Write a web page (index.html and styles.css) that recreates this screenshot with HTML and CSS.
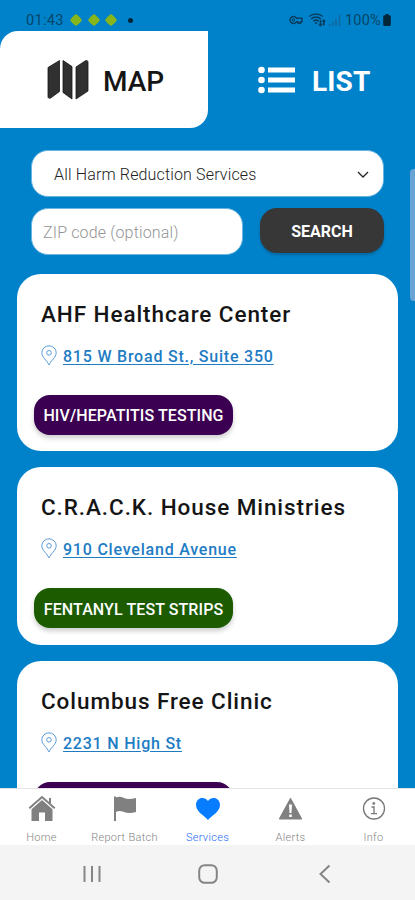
FILE: index.html
```html
<!DOCTYPE html>
<html lang="en">
<head>
<meta charset="utf-8">
<meta name="viewport" content="width=device-width">
<title>Services</title>
<link rel="stylesheet" href="styles.css">
</head>
<body>
<svg class="defs" width="0" height="0" aria-hidden="true">
  <symbol id="pin" viewBox="0 0 16 21"><path d="M8 20C6.500 16 .8 12.300.8 7.800a7.200 7 0 0 1 14.400 0C15.200 12.300 9.500 16 8 20Z"/><circle cx="8" cy="7.800" r="2.300"/></symbol>
  <symbol id="droid" viewBox="0 0 12 12"><path d="M6 0 8 1.500 10 3.500 12 6.200 10 8.800 8 10.500 6 12 4 10.500 2 8.800 0 6.200 2 3.500 4 1.500Z"/></symbol>
</svg>
<div class="screen">
  <header class="status">
    <span class="clock">01:43</span>
    <div class="droids">
      <svg><use href="#droid"/></svg><svg><use href="#droid"/></svg><svg><use href="#droid"/></svg>
    </div>
    <i class="dot"></i>
    <svg class="signals" width="53" height="16" viewBox="0 0 53 16" fill="none" stroke="#073e60">
      <path stroke-width="1.500" d="M7.500 6.200A3.500 3.500 0 1 0 7.500 9.800H9V11.300H11.500V9.800H13V6.200Z"/><circle cx="4.500" cy="8" r="1.200"/>
      <path stroke-width="1.500" d="M20 4.500Q27 -.5 34 4.500M22 7Q27 3 32 7M24.300 9.300Q27 7 29.700 9.300"/><path stroke-width="1.700" d="M27 10V12M31.500 8V13.500M30 12 31.500 13.500 33 12M34.800 13.500V8.500M33.500 9.800 34.800 8.300 36 9.800"/>
      <path stroke="#13679b" stroke-width="1.500" d="M41 12V14M44 10V14M47 7V14M50.500 3V14"/>
    </svg>
    <span class="percent">100%</span>
    <svg class="battery" width="8" height="12" viewBox="0 0 8 12"><path d="M2.500 0H5.500V1.300H6.500Q7.800 1.300 7.800 2.600V10.500Q7.800 12 6.300 12H1.700Q.2 12 .2 10.500V2.600Q.2 1.300 1.500 1.300H2.500Z"/></svg>
  </header>
  <nav class="tabs">
    <div class="tab map">
      <svg width="42" height="40" viewBox="0 0 42 40"><path d="M1 7.500 12.500 .5V31.500L4 37.800Q1 39.300 1 36.500ZM16 .5 25 6.500V39L16 32.500ZM29 7 38 1Q41 -.5 41 2.500V31L29 39Z"/></svg>
      <span>MAP</span>
    </div>
    <div class="tab list">
      <svg width="38" height="28" viewBox="0 0 38 28"><circle cx="3.500" cy="4" r="3.300"/><circle cx="3.500" cy="14" r="3.300"/><circle cx="3.500" cy="24" r="3.300"/><path d="M10 1.500H37V6.500H10ZM10 11.500H37V16.500H10ZM10 21.500H37V26.500H10Z"/></svg>
      <span>LIST</span>
    </div>
  </nav>
  <form class="filters">
    <div class="select"><span>All Harm Reduction Services</span><svg width="12" height="8" viewBox="0 0 12 8"><path d="M1 1 6 6 11 1"/></svg></div>
    <div class="row"><div class="zip"><span>ZIP code (optional)</span></div><button type="button" class="search"><span>SEARCH</span></button></div>
  </form>
  <main class="cards">
    <article class="card"><h2>AHF Healthcare Center</h2><p class="address"><svg><use href="#pin"/></svg><a>815 W Broad St., Suite 350</a></p><div class="tag purple"><span>HIV/HEPATITIS TESTING</span></div></article>
    <article class="card"><h2>C.R.A.C.K. House Ministries</h2><p class="address"><svg><use href="#pin"/></svg><a>910 Cleveland Avenue</a></p><div class="tag green"><span>FENTANYL TEST STRIPS</span></div></article>
    <article class="card"><h2>Columbus Free Clinic</h2><p class="address"><svg><use href="#pin"/></svg><a>2231 N High St</a></p><div class="tag purple"></div></article>
  </main>
  <nav class="bottom">
    <div class="item"><svg width="28" height="28" viewBox="0 0 28 28"><path d="M14 4.500 24.500 13.800V26H17V17.500H11V26H3.500V13.800Z"/><path class="line" d="M1.300 13.300 14 2 26.700 13.300M22 3V8"/><path class="gap" d="M2.600 14.500 14 4.500 25.400 14.500"/></svg><span>Home</span></div>
    <div class="item"><svg width="28" height="28" viewBox="0 0 28 28"><path d="M3 1.500H5V2.500Q9 1 13 3T25 3V17Q18 19 13 17T5 17V26H3Z"/></svg><span>Report Batch</span></div>
    <div class="item active"><svg width="28" height="28" viewBox="0 0 28 28"><path d="M14 25C11 21 2 17 2 10C2 2 11 1 14 6C17 1 26 2 26 10C26 17 17 21 14 25Z"/></svg><span>Services</span></div>
    <div class="item"><svg width="28" height="28" viewBox="0 0 28 28"><path fill-rule="evenodd" d="M13 3.200Q13.500 2.500 14 3.200L25 23.500Q25.500 24.500 24.500 24.500H2.500Q1.500 24.500 2 23.500ZM12 9.500 12.500 18H14.500L15 9.500ZM12.200 19.500V22H14.800V19.500Z"/></svg><span>Alerts</span></div>
    <div class="item"><svg width="28" height="28" viewBox="0 0 28 28"><circle class="ring" cx="14" cy="13.500" r="10.500"/><circle cx="13.800" cy="8.500" r="1.400"/><path class="ring" d="M11.500 12H14V18.500M11 18.700H17"/></svg><span>Info</span></div>
  </nav>
  <footer class="system">
    <svg width="18" height="18" viewBox="0 0 18 18"><path d="M1.500 1V17M9 1V17M16.500 1V17"/></svg>
    <svg width="20" height="20" viewBox="0 0 20 20"><rect x="1.200" y="1.200" width="17.600" height="17.600" rx="5.500"/></svg>
    <svg width="12" height="20" viewBox="0 0 12 20"><path d="M10.500 1.500 1.500 10 10.500 18.500"/></svg>
  </footer>
  <i class="scrollbar"></i>
</div>
</body>
</html>
```
FILE: styles.css
```css
* { box-sizing: border-box; }
body { margin: 0; font-family: Roboto, "Liberation Sans", sans-serif; background: #0082ca; }
.defs { position: absolute; }
svg { display: block; flex: none; }
.screen { position: relative; width: 415px; height: 900px; overflow: hidden; display: flex; flex-direction: column; background: #0082ca; }
.status { height: 31px; flex: none; display: flex; align-items: center; padding: 9px 24px 0 26px; color: #064568; }
.clock { width: 44px; font-size: 14.500px; letter-spacing: .3px; }
.droids { display: flex; gap: 5.500px; fill: #87b51c; }
.droids svg { width: 12px; height: 12px; }
.dot { width: 5px; height: 5px; margin-left: 11px; border-radius: 50%; background: #032337; }
.signals { margin-left: auto; }
.percent { margin-left: 3px; width: 37px; font-size: 14.500px; letter-spacing: .2px; }
.battery { margin-left: 1px; fill: #03263b; }
.tabs { display: flex; height: 97px; flex: none; }
.tab { display: flex; align-items: center; flex: none; font-size: 28px; font-weight: 500; }
.map { width: 208px; height: 97px; padding-left: 47px; background: #fff; border-radius: 18px 0 18px 0; color: #151515; }
.map svg { fill: #303030; stroke: #171717; stroke-width: .8; }
.map span { margin: 3px 0 0 14px; }
.list { padding-left: 50px; color: #fff; font-weight: 700; }
.list svg { fill: #fff; }
.list span { margin: 3px 0 0 16px; letter-spacing: .1px; }
.filters { flex: none; margin: 22px 31px 0; }
.select { height: 47px; border: 1px solid #68b5e0; border-radius: 17px; background: #fff; display: flex; align-items: center; justify-content: space-between; padding: 1px 14px 0 22px; color: #222; font-size: 16px; font-weight: 300; letter-spacing: .15px; }
.select svg { margin-top: 2px; fill: none; stroke: #222; stroke-width: 1.300; }
.row { display: flex; margin-top: 11px; align-items: flex-start; }
.zip { width: 212px; height: 47px; border: 1px solid #68b5e0; border-radius: 17px; background: #fff; padding: 1px 11px 0; display: flex; align-items: center; color: #949494; font-size: 16px; font-weight: 300; letter-spacing: .15px; }
.search { margin: 0 0 0 17px; width: 124px; height: 45px; border: 0; padding: 1px 0 0; border-radius: 17px; background: #373737; color: #fff; font: 700 16px Roboto, sans-serif; box-shadow: 0 2px 3px #0003; }
.cards { flex: 1; min-height: 0; overflow: hidden; padding: 18.500px 17px 0; display: flex; flex-direction: column; gap: 16px; }
.card { height: 177.500px; flex: none; border-radius: 24px; background: #fff; padding: 26px 17px 0 24px; display: flex; flex-direction: column; align-items: flex-start; }
h2 { margin: 0; line-height: 28px; height: 28px; font-size: 22.500px; font-weight: 500; letter-spacing: .92px; color: #151515; white-space: nowrap; }
.address { margin: 17px 0 0; height: 21px; display: flex; align-items: center; color: #1e7cc4; }
.address svg { width: 16px; height: 21px; fill: none; stroke: #5a9cdb; stroke-width: 1; }
.address a { margin: 3px 0 0 6px; font-size: 16px; line-height: 20px; font-weight: 500; letter-spacing: .78px; text-decoration: underline; text-decoration-thickness: 1px; text-underline-offset: 2px; white-space: nowrap; }
.tag { margin: 29px 0 0 -7px; width: 199px; height: 40px; flex: none; border-radius: 16px; color: #fff; display: flex; align-items: center; justify-content: center; font-size: 16px; font-weight: 500; letter-spacing: .1px; padding-top: 2px; white-space: nowrap; box-shadow: 0 3px 5px #0003; }
.purple { background: #3c0052; }
.green { background: #1c5b00; }
.bottom { height: 57px; flex: none; border-top: 1px solid #e4e4e4; background: #fff; display: grid; grid-template-columns: repeat(5, 83px); color: #858585; }
.item { display: flex; flex-direction: column; align-items: center; padding-top: 6px; font-size: 11px; line-height: 14px; letter-spacing: .3px; font-weight: 300; white-space: nowrap; }
.item svg { fill: #808080; }
.item span { margin-top: 8px; }
.item .line { fill: none; stroke: #808080; stroke-width: 2; }
.item .gap { fill: none; stroke: #fff; stroke-width: 1; }
.item .ring { fill: none; stroke: #777; stroke-width: 1.300; }
.active { color: #1769fa; }
.item.active svg { fill: #087cff; }
.system { height: 55px; flex: none; background: #f4f4f4; display: grid; grid-template-columns: 18px 20px 12px; column-gap: 97px 101px; align-items: center; padding: 2px 0 0 83px; }
.system { column-gap: 97px; }
.system svg:last-child { margin-left: 4px; }
.system svg { fill: none; stroke: #858585; stroke-width: 2; }
.scrollbar { position: absolute; right: 0; top: 169px; width: 5px; height: 132px; border-radius: 4px 0 0 4px; background: #68a5d6; }
```
